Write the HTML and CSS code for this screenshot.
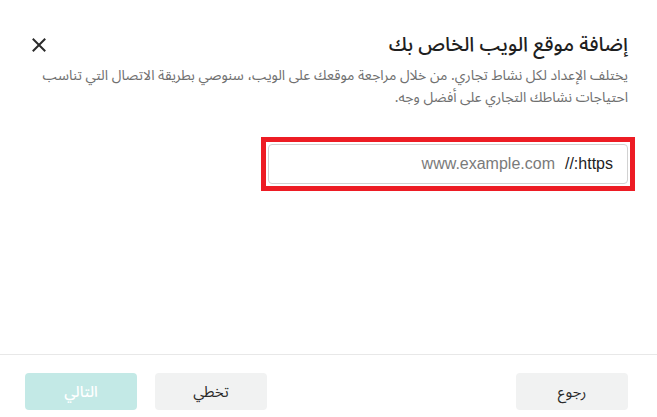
FILE: index.html
```html
<!DOCTYPE html>
<html lang="ar" dir="rtl">
<head>
<meta charset="utf-8">
<link rel="stylesheet" href="styles.css">
</head>
<body>
<div class="dialog">
  <div class="content">
    <div class="header">
      <h1 class="title">إضافة موقع الويب الخاص بك</h1>
      <button class="close" aria-label="إغلاق">
        <svg width="14" height="14" viewBox="0 0 14 14"><path d="M1.5 1.5 L12.5 12.5 M12.5 1.5 L1.5 12.5" stroke="#2b2b2b" stroke-width="2" stroke-linecap="square" fill="none"/></svg>
      </button>
    </div>
    <p class="desc">يختلف الإعداد لكل نشاط تجاري. من خلال مراجعة موقعك على الويب، سنوصي بطريقة الاتصال التي تناسب احتياجات نشاطك التجاري على أفضل وجه.</p>
    <div class="highlight">
      <div class="field">
        <span class="prefix">https://</span>
        <span class="placeholder">www.example.com</span>
      </div>
    </div>
  </div>
  <div class="footer">
    <button class="btn gray">رجوع</button>
    <div class="group">
      <button class="btn gray">تخطي</button>
      <button class="btn primary">التالي</button>
    </div>
  </div>
</div>
</body>
</html>
```
FILE: styles.css
```css
* { box-sizing: border-box; }
html, body { margin: 0; padding: 0; background: #fff; }
body {
  font-family: "Noto Sans Arabic", "Noto Sans", "DejaVu Sans", sans-serif;
  color: #222;
}
.dialog {
  width: 657px;
  height: 417px;
  display: flex;
  flex-direction: column;
}
.content {
  flex: 1;
  padding: 29px 29px 0 25px;
}
.header {
  display: flex;
  align-items: center;
  justify-content: space-between;
}
.title {
  margin: 0;
  font-size: 20px;
  font-weight: 500;
  line-height: 32px;
  color: #1f1f1f;
}
.close {
  border: 0;
  background: none;
  padding: 0;
  margin-left: 7px;
  width: 14px;
  height: 14px;
  display: flex;
}
.desc {
  margin: 4px 0 0;
  font-size: 14px;
  line-height: 22px;
  color: #6f6f6f;
}
.highlight {
  margin-top: 28px;
  margin-right: -7px;
  margin-left: auto;
  width: 374px;
  border: 5px solid #ed1c24;
  padding: 2px;
}
.field {
  height: 40px;
  border: 1px solid #d2d2d2;
  border-radius: 4px;
  display: flex;
  align-items: center;
  gap: 10px;
  padding: 0 14px;
  font-family: "Liberation Sans", Arial, sans-serif;
  font-size: 16px;
}
.prefix { color: #222; }
.placeholder { color: #7a7a7a; }
.footer {
  border-top: 1px solid #e8e8e8;
  padding: 18px 29px 7px 25px;
  display: flex;
  justify-content: space-between;
}
.group { display: flex; gap: 18px; }
.btn {
  width: 112px;
  height: 37px;
  border: 0;
  border-radius: 4px;
  font-family: "Noto Sans Arabic", "Noto Sans", "DejaVu Sans", sans-serif;
  font-size: 15px;
  color: #2b2b2b;
}
.gray { background: #f1f2f2; }
.primary { background: #c3e9e6; color: #fff; font-weight: 500; }
```
